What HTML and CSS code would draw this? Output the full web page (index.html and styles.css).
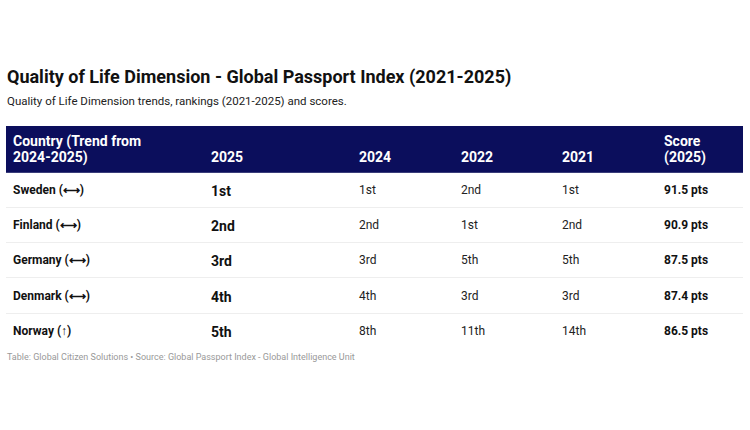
FILE: index.html
```html
<!DOCTYPE html>
<html>
<head>
<meta charset="utf-8">
<link rel="stylesheet" href="styles.css">
</head>
<body>
<div class="wrap">
  <h1 class="title">Quality of Life Dimension - Global Passport Index (2021-2025)</h1>
  <p class="subtitle">Quality of Life Dimension trends, rankings (2021-2025) and scores.</p>
  <table class="tbl">
    <colgroup>
      <col class="c1"><col class="c2"><col class="c3"><col class="c4"><col class="c5"><col class="c6">
    </colgroup>
    <thead>
      <tr>
        <th>Country (Trend from<br>2024-2025)</th>
        <th>2025</th>
        <th>2024</th>
        <th>2022</th>
        <th>2021</th>
        <th>Score<br>(2025)</th>
      </tr>
    </thead>
    <tbody>
      <tr><td class="country">Sweden (⟷)</td><td class="rank">1st</td><td>1st</td><td>2nd</td><td>1st</td><td class="score">91.5 pts</td></tr>
      <tr><td class="country">Finland (⟷)</td><td class="rank">2nd</td><td>2nd</td><td>1st</td><td>2nd</td><td class="score">90.9 pts</td></tr>
      <tr><td class="country">Germany (⟷)</td><td class="rank">3rd</td><td>3rd</td><td>5th</td><td>5th</td><td class="score">87.5 pts</td></tr>
      <tr><td class="country">Denmark (⟷)</td><td class="rank">4th</td><td>4th</td><td>3rd</td><td>3rd</td><td class="score">87.4 pts</td></tr>
      <tr><td class="country">Norway (↑)</td><td class="rank">5th</td><td>8th</td><td>11th</td><td>14th</td><td class="score">86.5 pts</td></tr>
    </tbody>
  </table>
  <p class="note">Table: Global Citizen Solutions • Source: Global Passport Index - Global Intelligence Unit</p>
</div>
</body>
</html>
```
FILE: styles.css
```css
html, body {
  margin: 0;
  padding: 0;
  background: #ffffff;
  font-family: Roboto, "Liberation Sans", Arial, sans-serif;
  color: #111111;
}
.wrap {
  padding: 66px 7px 0 6px;
}
.title {
  margin: 0 0 0 1px;
  font-size: 18px;
  line-height: 22px;
  font-weight: 700;
  color: #111111;
}
.subtitle {
  margin: 5px 0 0 1px;
  font-size: 11.5px;
  line-height: 16px;
  color: #222222;
}
.tbl {
  margin-top: 17px;
  width: 737px;
  border-collapse: collapse;
  table-layout: fixed;
}
.c1 { width: 198px; }
.c2 { width: 148px; }
.c3 { width: 102px; }
.c4 { width: 101px; }
.c5 { width: 102px; }
.c6 { width: 86px; }
.tbl thead tr {
  height: 46px;
}
.tbl th {
  background: #0b0e5c;
  color: #ffffff;
  font-size: 14px;
  line-height: 16px;
  font-weight: 700;
  text-align: left;
  vertical-align: bottom;
  padding: 4px 7px 7px 7px;
  border-bottom: 1px solid #3a3d7a;
}
.tbl tbody tr {
  height: 35.3px;
}
.tbl td {
  font-size: 12px;
  line-height: 16px;
  color: #222222;
  padding: 0 7px;
  border-bottom: 1px solid #eeeeee;
  vertical-align: middle;
}
.tbl tbody tr:last-child td {
  border-bottom: none;
}
.tbl td.country {
  font-weight: 700;
  color: #111111;
}
.tbl td.rank {
  font-size: 14px;
  font-weight: 700;
  color: #111111;
  padding-top: 2px;
}
.tbl td.score {
  font-weight: 700;
  color: #111111;
}
.note {
  margin: 3px 0 0 1px;
  font-size: 9px;
  line-height: 12px;
  color: #999999;
}
```
